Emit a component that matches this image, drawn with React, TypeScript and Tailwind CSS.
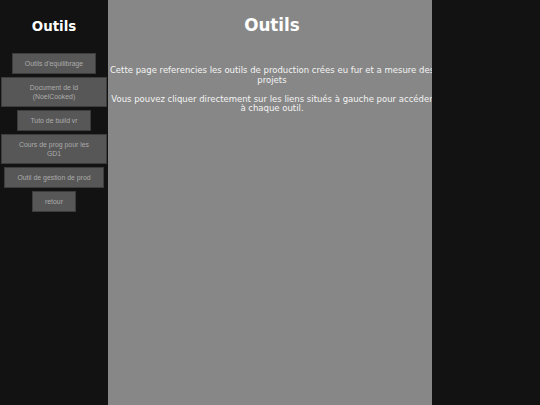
import React from "react";

const tools = [
  "Outils d'equilibrage",
  "Document de ld (NoelCooked)",
  "Tuto de build vr",
  "Cours de prog pour les GD1",
  "Outil de gestion de prod",
  "retour",
];

export default function App() {
  return (
    <div className="flex h-[405px] w-full overflow-hidden bg-[#121212]">
      <aside className="flex w-[108px] shrink-0 flex-col items-center">
        <h2 className="mt-[19px] text-[13.4px] font-bold leading-[15.6px] text-white [font-family:'DejaVu_Sans',sans-serif]">
          Outils
        </h2>
        <nav className="mt-[18px] flex w-full flex-col items-center gap-[3px] px-px">
          {tools.map((t) => (
            <a
              key={t}
              href="#"
              className="block max-w-[106px] border border-[#3d3d3d] bg-[#575757] px-[12px] py-[5px] text-center text-[6.9px] leading-[9px] text-[#ababab] [font-family:'Liberation_Sans',Arial,sans-serif]"
            >
              {t}
            </a>
          ))}
        </nav>
      </aside>
      <main className="w-[324px] shrink-0 overflow-hidden bg-[#878787]">
        <div className="w-[328px] text-center [font-family:'DejaVu_Sans',sans-serif]">
          <h1 className="mt-[16px] text-[16.8px] font-bold leading-[19.6px] text-white">
            Outils
          </h1>
          <p className="mt-[30.5px] text-[8.5px] leading-[9.8px] text-[#f4f4f4]">
            Cette page referencies les outils de production crées eu fur et a mesure des projets
          </p>
          <p className="mt-[9px] text-[8.5px] leading-[9.8px] text-[#f4f4f4]">
            Vous pouvez cliquer directement sur les liens situés à gauche pour accéder à chaque outil.
          </p>
        </div>
      </main>
    </div>
  );
}
